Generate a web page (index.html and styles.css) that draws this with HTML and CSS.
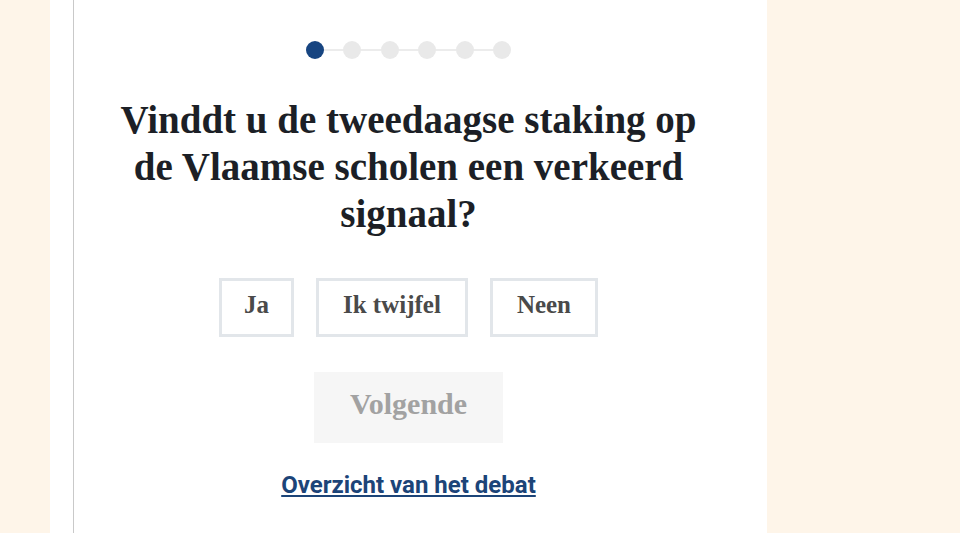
FILE: index.html
```html
<!DOCTYPE html>
<html lang="nl">
<head>
    <meta charset="UTF-8">
    <title>Debat - Vraag 1</title>
    <link rel="stylesheet" href="styles.css">
</head>
<body>
    <div class="panel">
        <div class="steps">
            <span class="step active"></span>
            <span class="step"></span>
            <span class="step"></span>
            <span class="step"></span>
            <span class="step"></span>
            <span class="step"></span>
        </div>

        <h1 class="question">Vinddt u de tweedaagse staking op de Vlaamse scholen een verkeerd signaal?</h1>

        <div class="answers">
            <button class="answer">Ja</button>
            <button class="answer">Ik twijfel</button>
            <button class="answer">Neen</button>
        </div>

        <button class="next" disabled>Volgende</button>

        <a class="overview" href="#">Overzicht van het debat</a>
    </div>
</body>
</html>
```

FILE: styles.css
```css
html, body {
    height: 100%;
}

body {
    margin: 0;
    background-color: #fef5e9;
    font-family: "Liberation Serif", serif;
    overflow: hidden;
}

.panel {
    margin-left: 50px;
    width: 717px;
    min-height: 100%;
    background: linear-gradient(#c9c9c9, #c9c9c9) 23px 0 / 1px 100% no-repeat, #fff;
    display: flex;
    flex-direction: column;
    align-items: center;
    padding-top: 41px;
    box-sizing: border-box;
}

.steps {
    display: flex;
    gap: 19.5px;
    position: relative;
}

.steps::before {
    content: "";
    position: absolute;
    left: 9px;
    right: 9px;
    top: 8px;
    height: 2px;
    background-color: #ececec;
}

.step {
    width: 18px;
    height: 18px;
    border-radius: 50%;
    background-color: #e9e9e9;
    position: relative;
}

.step.active {
    background-color: #174581;
}

.question {
    width: 600px;
    margin: 37px 0 0;
    font-size: 39px;
    line-height: 47px;
    font-weight: bold;
    color: #1c1f26;
    text-align: center;
}

.answers {
    display: flex;
    gap: 22px;
    margin-top: 41px;
}

.answer {
    height: 59px;
    padding: 0 24px 6px;
    border: 3px solid #e2e6ea;
    background-color: #fff;
    font-family: "Liberation Serif", serif;
    font-size: 25px;
    font-weight: bold;
    color: #4a4a4a;
    cursor: pointer;
}

.answer:first-child {
    padding: 0 22px 6px;
}

.next {
    margin-top: 35px;
    width: 189px;
    height: 71px;
    padding-bottom: 9px;
    border: none;
    background-color: #f6f6f6;
    font-family: "Liberation Serif", serif;
    font-size: 30px;
    font-weight: bold;
    color: #a2a2a2;
}

.overview {
    margin-top: 28px;
    font-family: Roboto, sans-serif;
    font-size: 24px;
    font-weight: bold;
    color: #1c4478;
}
```
